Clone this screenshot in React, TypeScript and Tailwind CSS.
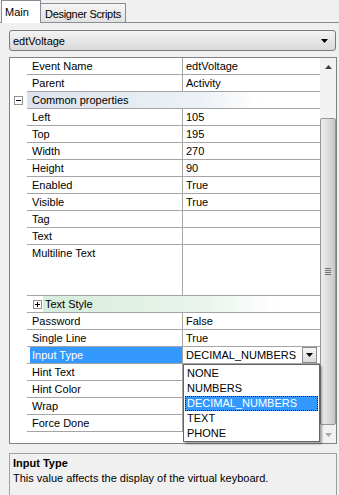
import React from 'react';

type Row =
  | { kind: 'prop'; label: string; value?: string; tall?: boolean; selected?: boolean; combo?: boolean }
  | { kind: 'group'; label: string; expanded: boolean; tone: 'blue' | 'green' };

const rows: Row[] = [
  { kind: 'prop', label: 'Event Name', value: 'edtVoltage' },
  { kind: 'prop', label: 'Parent', value: 'Activity' },
  { kind: 'group', label: 'Common properties', expanded: true, tone: 'blue' },
  { kind: 'prop', label: 'Left', value: '105' },
  { kind: 'prop', label: 'Top', value: '195' },
  { kind: 'prop', label: 'Width', value: '270' },
  { kind: 'prop', label: 'Height', value: '90' },
  { kind: 'prop', label: 'Enabled', value: 'True' },
  { kind: 'prop', label: 'Visible', value: 'True' },
  { kind: 'prop', label: 'Tag' },
  { kind: 'prop', label: 'Text' },
  { kind: 'prop', label: 'Multiline Text', tall: true },
  { kind: 'group', label: 'Text Style', expanded: false, tone: 'green' },
  { kind: 'prop', label: 'Password', value: 'False' },
  { kind: 'prop', label: 'Single Line', value: 'True' },
  { kind: 'prop', label: 'Input Type', value: 'DECIMAL_NUMBERS', selected: true, combo: true },
  { kind: 'prop', label: 'Hint Text' },
  { kind: 'prop', label: 'Hint Color' },
  { kind: 'prop', label: 'Wrap' },
  { kind: 'prop', label: 'Force Done' },
];

const inputTypes = ['NONE', 'NUMBERS', 'DECIMAL_NUMBERS', 'TEXT', 'PHONE'];

const DownArrow = ({ color = '#000' }: { color?: string }) => (
  <svg width="7" height="4" viewBox="0 0 7 4">
    <path d="M0 0h7L3.5 4z" fill={color} />
  </svg>
);

const ExpandBox = ({ open }: { open: boolean }) => (
  <div className="w-[9px] h-[9px] border border-[#919191] bg-white flex items-center justify-center relative">
    <div className="w-[5px] h-px bg-black" />
    {!open && <div className="absolute w-px h-[5px] bg-black" />}
  </div>
);

const PropRow = ({ row }: { row: Row }) => {
  if (row.kind === 'group') {
    const bg =
      row.tone === 'blue'
        ? 'bg-gradient-to-r from-[#dbe3ee] via-[#eef2f7] via-60% to-white to-80%'
        : 'bg-gradient-to-r from-[#d6ecdc] via-[#ebf5ee] via-60% to-white to-85%';
    if (row.expanded) {
      return (
        <div className="flex h-[17px]">
          <div className="w-[17px] shrink-0 flex items-center justify-center">
            <ExpandBox open />
          </div>
          <div className={`flex-1 border-b border-[#a5a5a5] pl-[5px] pt-px leading-[15px] ${bg}`}>{row.label}</div>
        </div>
      );
    }
    return (
      <div className="flex h-[17px]">
        <div className="w-[17px] shrink-0" />
        <div className="flex flex-1 border-b border-[#a5a5a5]">
          <div className="w-[16px] shrink-0 flex items-center pl-[6px]">
            <ExpandBox open={false} />
          </div>
          <div className={`flex-1 pl-[2px] pt-px leading-[15px] ${bg}`}>{row.label}</div>
        </div>
      </div>
    );
  }

  return (
    <div className={`flex ${row.tall ? 'h-[51px]' : 'h-[17px]'}`}>
      <div className="w-[17px] shrink-0" />
      <div className="flex flex-1 border-b border-[#a5a5a5]">
        <div className="w-[156px] shrink-0 border-r border-[#a5a5a5] leading-[15px]">
          {row.selected ? (
            <div className="ml-[3px] h-[16px] pl-[2px] pt-px bg-[#3399ff] text-white">{row.label}</div>
          ) : (
            <div className="pl-[5px] pt-px">{row.label}</div>
          )}
        </div>
        <div className="flex-1 flex pl-[3px] leading-[15px]">
          <span className="flex-1 pt-px">{row.value}</span>
          {row.combo && (
            <div className="w-[15px] h-[16px] mr-[3px] border border-[#8a8a8a] bg-gradient-to-b from-[#f6f6f6] to-[#dcdcdc] flex items-center justify-center">
              <DownArrow />
            </div>
          )}
        </div>
      </div>
    </div>
  );
};

export default function App() {
  return (
    <div className="relative w-[339px] h-[495px] overflow-hidden bg-[#f0f0f0] text-[11px] text-black font-['Liberation_Sans',Arial,sans-serif]">
      {/* tabs */}
      <div className="flex items-end h-[23px] border-b border-[#898c95] pl-px">
        <div className="relative z-10 h-[23px] w-[40px] -mb-px bg-white border border-b-0 border-[#898c95] pl-[3px] pt-[4px] leading-[14px]">
          Main
        </div>
        <div className="h-[19px] w-[85px] bg-gradient-to-b from-[#f5f5f5] to-[#e2e2e2] border border-b-0 border-l-0 border-[#898c95] pl-[4px] pt-[3px] leading-[14px] whitespace-nowrap tracking-[-0.3px]">
          Designer Scripts
        </div>
      </div>

      {/* object selector */}
      <div className="ml-[9px] mt-[7px] w-[327px] h-[21px] rounded-[3px] border border-[#7a7a7a] bg-gradient-to-b from-[#f4f4f4] to-[#d9d9d9] flex items-center pl-[3px] pr-[7px]">
        <span className="flex-1 leading-[14px]">edtVoltage</span>
        <DownArrow />
      </div>

      {/* property grid */}
      <div className="ml-[9px] mt-[6px] w-[328px] h-[387px] border border-[#828282] bg-white flex">
        <div className="flex-1 flex flex-col">
          {rows.map((r) => (
            <PropRow key={r.label} row={r} />
          ))}
        </div>
        <div className="w-[16px] shrink-0 flex flex-col bg-[#f2f2f2]">
          <div className="h-[17px] flex items-center justify-center">
            <svg width="7" height="4" viewBox="0 0 7 4">
              <path d="M3.5 0L7 4H0z" fill="#404040" />
            </svg>
          </div>
          <div className="h-[43px]" />
          <div className="h-[307px] rounded-[2px] border border-[#969696] bg-gradient-to-r from-[#ececec] via-[#dcdcdc] to-[#c6c6c6] flex flex-col items-center justify-center gap-px">
            <div className="w-[6px] h-px bg-[#707070]" />
            <div className="w-[6px] h-px bg-[#707070]" />
            <div className="w-[6px] h-px bg-[#707070]" />
            <div className="w-[6px] h-px bg-[#707070]" />
          </div>
          <div className="h-px" />
          <div className="h-[17px] flex items-center justify-center">
            <DownArrow color="#a8a8a8" />
          </div>
        </div>
      </div>

      {/* open dropdown list */}
      <div className="absolute left-[183px] top-[364px] w-[137px] h-[78px] border border-[#646464] bg-white shadow-[2px_2px_2px_rgba(0,0,0,0.35)] p-px">
        {inputTypes.map((t) =>
          t === 'DECIMAL_NUMBERS' ? (
            <div
              key={t}
              className="h-[15px] leading-[13px] pl-[1px] bg-[#3399ff] text-white border border-dotted border-[#1a1a1a]"
            >
              {t}
            </div>
          ) : (
            <div key={t} className="h-[15px] leading-[15px] pl-[2px]">
              {t}
            </div>
          )
        )}
      </div>

      {/* description */}
      <div className="ml-[9px] mt-[9px] w-[328px] h-[60px] border border-[#a0a0a0] bg-[#f0f0f0] pl-[3px] pt-[2px] leading-[15px]">
        <div className="font-bold">Input Type</div>
        <div>This value affects the display of the virtual keyboard.</div>
      </div>
    </div>
  );
}
